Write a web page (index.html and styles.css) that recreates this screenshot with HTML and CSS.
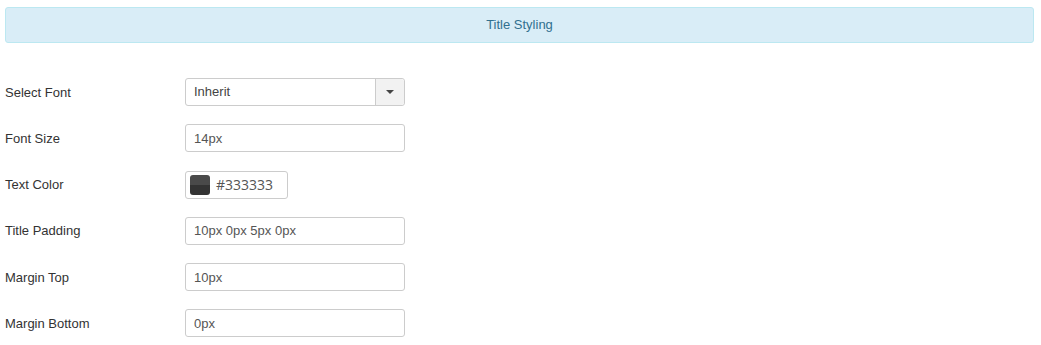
FILE: index.html
```html
<!DOCTYPE html>
<html lang="en">
<head>
  <meta charset="UTF-8">
  <title>Title Styling</title>
  <link rel="stylesheet" href="styles.css">
</head>
<body>
  <div class="panel-heading">Title Styling</div>

  <div class="form">
    <div class="row">
      <label>Select Font</label>
      <div class="select">
        <span class="select-value">Inherit</span>
        <span class="select-arrow"><span class="caret"></span></span>
      </div>
    </div>
    <div class="row">
      <label>Font Size</label>
      <input class="field" type="text" value="14px">
    </div>
    <div class="row">
      <label>Text Color</label>
      <div class="color">
        <span class="swatch"></span>
        <span class="color-value">#333333</span>
      </div>
    </div>
    <div class="row">
      <label>Title Padding</label>
      <input class="field" type="text" value="10px 0px 5px 0px">
    </div>
    <div class="row">
      <label>Margin Top</label>
      <input class="field" type="text" value="10px">
    </div>
    <div class="row">
      <label>Margin Bottom</label>
      <input class="field" type="text" value="0px">
    </div>
  </div>
</body>
</html>
```

FILE: styles.css
```css
body {
  font-family: "Liberation Sans", Arial, sans-serif;
  font-size: 13px;
  color: #333;
  background: #fff;
  margin: 7px 7px 0 5px;
}
.panel-heading {
  height: 34px;
  line-height: 34px;
  text-align: center;
  background: #d9edf7;
  border: 1px solid #bce8f1;
  border-radius: 3px;
  color: #31708f;
  font-size: 13px;
}
.form {
  margin-top: 35px;
  display: flex;
  flex-direction: column;
  gap: 18.3px;
}
.row {
  display: flex;
  align-items: center;
  height: 28px;
}
.row label {
  width: 180px;
}
.field {
  width: 220px;
  height: 28px;
  box-sizing: border-box;
  padding: 0 8px;
  border: 1px solid #ccc;
  border-radius: 3px;
  font-family: inherit;
  font-size: 13px;
  color: #555;
  margin: 0;
}
.select {
  width: 220px;
  height: 28px;
  box-sizing: border-box;
  border: 1px solid #ccc;
  border-radius: 3px;
  display: flex;
  color: #444;
}
.select-value {
  flex: 1;
  padding-left: 8px;
  line-height: 26px;
}
.select-arrow {
  width: 28px;
  border-left: 1px solid #ccc;
  background: #f2f2f2;
  display: flex;
  align-items: center;
  justify-content: center;
  border-radius: 0 3px 3px 0;
}
.caret {
  width: 0;
  height: 0;
  border-left: 4px solid transparent;
  border-right: 4px solid transparent;
  border-top: 4px solid #444;
}
.color {
  width: 103px;
  height: 28px;
  box-sizing: border-box;
  border: 1px solid #ccc;
  border-radius: 3px;
  display: flex;
  align-items: center;
  padding-left: 4px;
  gap: 6px;
}
.swatch {
  width: 20px;
  height: 20px;
  border-radius: 3px;
  background: linear-gradient(#4a4a4a 50%, #333 50%);
}
.color-value {
  font-family: "Open Sans", sans-serif;
  font-size: 14px;
  color: #555;
}
```
